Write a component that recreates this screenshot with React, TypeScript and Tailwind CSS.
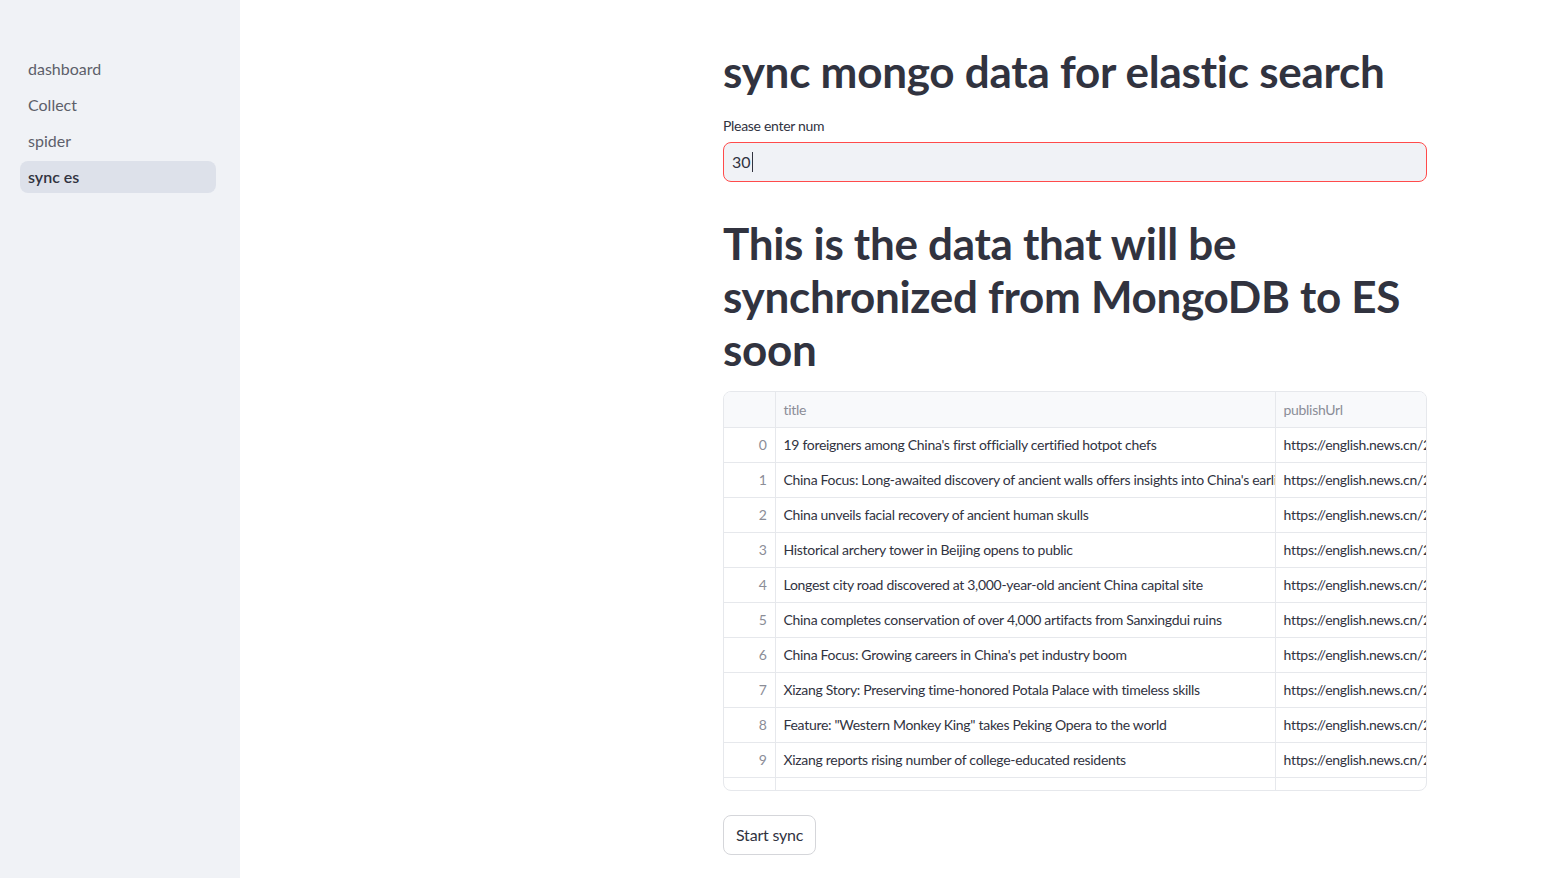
import React from "react";

const navItems = ["dashboard", "Collect", "spider", "sync es"];

const rows = [
  "19 foreigners among China's first officially certified hotpot chefs",
  "China Focus: Long-awaited discovery of ancient walls offers insights into China's earliest civilization",
  "China unveils facial recovery of ancient human skulls",
  "Historical archery tower in Beijing opens to public",
  "Longest city road discovered at 3,000-year-old ancient China capital site",
  "China completes conservation of over 4,000 artifacts from Sanxingdui ruins",
  "China Focus: Growing careers in China's pet industry boom",
  "Xizang Story: Preserving time-honored Potala Palace with timeless skills",
  "Feature: \"Western Monkey King\" takes Peking Opera to the world",
  "Xizang reports rising number of college-educated residents",
  "",
];

function Sidebar() {
  return (
    <aside className="w-[240px] shrink-0 bg-[#f0f2f6] min-h-screen pt-[53px] pl-5 pr-6">
      <nav className="flex flex-col gap-1">
        {navItems.map((item) => {
          const active = item === "sync es";
          return (
            <div
              key={item}
              className={
                active
                  ? "h-8 px-2 flex items-center rounded-lg bg-[#dde1ea] text-[16px] font-semibold text-[#31333f]"
                  : "h-8 px-2 flex items-center rounded-lg text-[16px] text-[#5d5f6a]"
              }
            >
              {item}
            </div>
          );
        })}
      </nav>
    </aside>
  );
}

function DataTable() {
  return (
    <div className="h-[400px] w-full overflow-hidden rounded-lg border border-[#e6e8ec]">
      <table className="w-[771px] border-collapse table-fixed text-[14px] tracking-[-0.3px] text-[#31333f]">
        <colgroup>
          <col className="w-[51px]" />
          <col className="w-[500px]" />
          <col className="w-[220px]" />
        </colgroup>
        <thead>
          <tr className="h-[35px] bg-[#f8f9fb]">
            <th className="border-b border-r border-[#e6e8ec]"></th>
            <th className="border-b border-r border-[#e6e8ec] px-2 text-left font-normal text-[#8b8d97]">title</th>
            <th className="border-b border-[#e6e8ec] px-2 text-left font-normal text-[#8b8d97]">publishUrl</th>
          </tr>
        </thead>
        <tbody>
          {rows.map((title, i) => (
            <tr key={i} className="h-[35px]">
              <td className="border-b border-r border-[#e6e8ec] pr-2 text-right text-[#8b8d97]">
                {title ? i : ""}
              </td>
              <td className="border-b border-r border-[#e6e8ec] pl-2 whitespace-nowrap overflow-hidden">
                {title}
              </td>
              <td className="border-b border-[#e6e8ec] pl-2 whitespace-nowrap overflow-hidden">
                {title ? "https://english.news.cn/20240926/c8" : ""}
              </td>
            </tr>
          ))}
        </tbody>
      </table>
    </div>
  );
}

export default function App() {
  return (
    <div className="flex min-h-screen bg-white text-[#31333f] font-['Lato',sans-serif]">
      <Sidebar />
      <main className="flex-1 pl-[483px] pt-[45px]">
        <div className="w-[704px] flex flex-col">
          <h1 className="text-[44px] font-bold leading-[53px] tracking-[-0.25px]">
            sync mongo data for elastic search
          </h1>
          <label className="mt-[18px] text-[14px] leading-5 tracking-[-0.3px]">Please enter num</label>
          <div className="mt-[6px] h-10 rounded-lg border border-[#ff4b4b] bg-[#f0f2f6] flex items-center px-2 text-[16px]">
            <span>30</span>
            <span className="ml-px h-5 w-px bg-[#31333f]" />
          </div>
          <h1 className="mt-[35px] text-[44px] font-bold leading-[53px] tracking-[-0.3px]">
            This is the data that will be synchronized from MongoDB to ES soon
          </h1>
          <div className="mt-[15px]">
            <DataTable />
          </div>
          <div className="mt-6">
            <button className="h-10 px-3 rounded-lg border border-[#d5d6da] bg-white text-[16px] tracking-[-0.2px] text-[#31333f]">
              Start sync
            </button>
          </div>
        </div>
      </main>
    </div>
  );
}
